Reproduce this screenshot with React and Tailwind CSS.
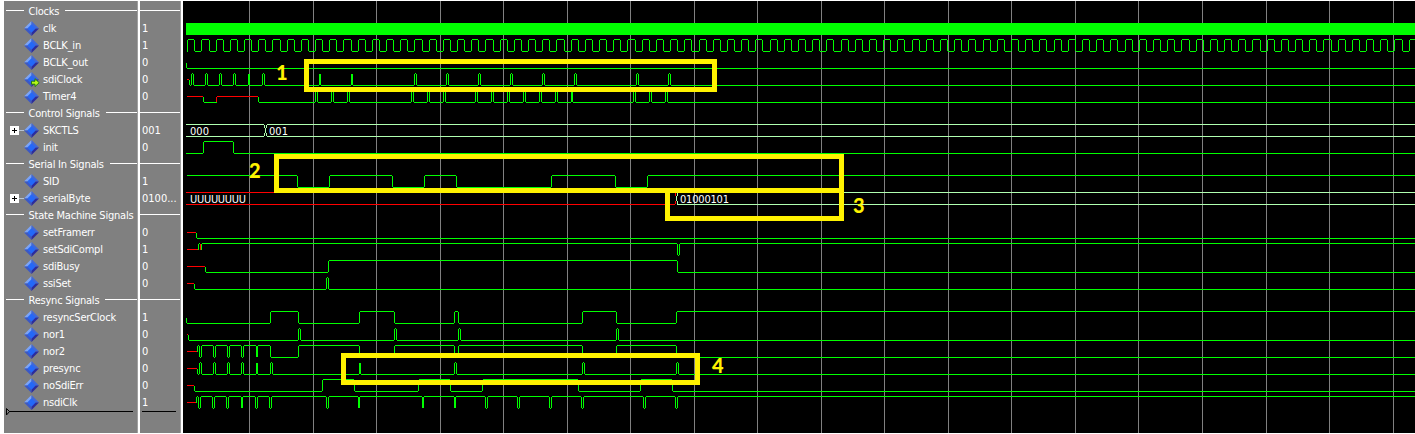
import React from "react";

const ROWS = [
  { group: "Clocks" },
  { name: "clk", value: "1" },
  { name: "BCLK_in", value: "1" },
  { name: "BCLK_out", value: "0" },
  { name: "sdiClock", value: "0", arrow: true },
  { name: "Timer4", value: "0" },
  { group: "Control Signals" },
  { name: "SKCTLS", value: "001", expand: true },
  { name: "init", value: "0" },
  { group: "Serial In Signals" },
  { name: "SID", value: "1" },
  { name: "serialByte", value: "0100...", expand: true },
  { group: "State Machine Signals" },
  { name: "setFramerr", value: "0" },
  { name: "setSdiCompl", value: "1" },
  { name: "sdiBusy", value: "0" },
  { name: "ssiSet", value: "0" },
  { group: "Resync Signals" },
  { name: "resyncSerClock", value: "1" },
  { name: "nor1", value: "0" },
  { name: "nor2", value: "0" },
  { name: "presync", value: "0" },
  { name: "noSdiErr", value: "0" },
  { name: "nsdiClk", value: "1" },
];

const END = 1415;

// row: index in the list; start: x where the defined level begins; from: level
// before it (mid = unknown); level: first defined level; edges: x of each toggle.
const bclkEdges = [];
for (let i = 1; 187.2 + i * 7.1015 < END; i++) bclkEdges.push(Math.round(187.2 + i * 7.1015));

const WAVES = [
  { row: 2, start: 187, level: 1, full: true, edges: bclkEdges },
  { row: 3, start: 186, level: 0, edges: [] },
  { row: 4, start: 189, level: 0, edges: [191, 193, 205, 207, 219, 221, 233, 235, 248, 249, 262, 264, 319, 320, 351, 352, 414, 416, 446, 448, 478, 480, 510, 512, 542, 544, 574, 576, 636, 638, 668, 670] },
  { row: 5, start: 203, level: 0, edges: [], end: 216 },
  { row: 5, start: 258, level: 0, noUnknown: true, edges: [315, 317, 331, 333, 347, 349, 411, 413, 427, 429, 443, 445, 475, 477, 491, 493, 507, 509, 523, 525, 539, 541, 555, 557, 571, 572, 633, 635, 649, 651, 665, 667] },
  { row: 8, start: 186, level: 0, bare: true, edges: [203, 233] },
  { row: 10, start: 186, level: 1, bare: true, edges: [297, 329, 392, 424, 456, 551, 615, 647] },
  { row: 13, start: 196, level: 0, edges: [] },
  { row: 14, start: 198, level: 1, edges: [], end: 200 },
  { row: 14, start: 201, level: 1, noUnknown: true, edges: [677, 679] },
  { row: 15, start: 205, level: 0, edges: [328, 677] },
  { row: 16, start: 194, level: 0, edges: [326, 328] },
  { row: 18, start: 186, level: 0, edges: [270, 298, 359, 394, 454, 458, 582, 616, 676] },
  { row: 19, start: 188, level: 0, edges: [298, 300, 394, 396, 458, 460, 616, 618] },
  { row: 20, start: 197, level: 1, edges: [199, 201, 213, 215, 227, 229, 241, 243, 256, 257, 270, 298, 359, 394, 454, 458, 582, 616, 676] },
  { row: 21, start: 197, level: 0, edges: [199, 201, 213, 215, 227, 229, 241, 243, 256, 257, 270, 272, 359, 360, 454, 456, 582, 584, 676, 678] },
  { row: 22, start: 194, level: 0, edges: [322, 354, 418, 450, 482, 578, 640, 672] },
  { row: 23, start: 196, level: 1, edges: [198, 200, 212, 214, 226, 228, 241, 242, 255, 257, 269, 271, 326, 328, 358, 359, 422, 423, 454, 455, 485, 487, 517, 519, 549, 551, 581, 583, 643, 645, 675, 677] },
];

// One-pixel runs, inclusive on both ends.
const hLine = (x1, x2, y) => (x2 >= x1 ? `M${x1} ${y}H${x2 + 1}V${y + 1}H${x1}Z` : "");
const vLine = (x, y1, y2) => `M${x} ${y1}V${y2 + 1}H${x + 1}V${y1}Z`;

function wavePath({ row, start, level, edges, end = END, full, bare }) {
  const mid = 11 + 17 * row;
  const hi = mid - 6;
  const lo = mid + 6;
  let d = "";
  if (full) d += vLine(start, hi + 1, lo);
  else if (!bare) d += level ? vLine(start, hi + 1, mid) : vLine(start, mid + 1, lo);
  let x = start;
  let on = level;
  [...edges, end].forEach((next, i) => {
    d += on ? hLine(x + 1, next - 1, hi) : hLine(x, next, lo);
    if (i < edges.length) d += vLine(next, hi + 1, lo);
    x = next;
    on = on ? 0 : 1;
  });
  return d;
}

function unknownPath({ row, start, noUnknown, bare, full }) {
  if (noUnknown || bare || full) return "";
  return hLine(187, start - 1, 11 + 17 * row);
}

const GRID = [249, 313, 376, 440, 503, 567, 630, 694, 757, 821, 884, 948, 1011, 1075, 1138, 1202, 1266, 1329, 1393];

const redExtra =
  vLine(216, 97, 102) + hLine(217, 257, 96) + vLine(200, 244, 249) +
  hLine(186, 674, 192) + hLine(186, 674, 204) + vLine(675, 193, 195) + vLine(675, 201, 203);

const busPath =
  hLine(186, 263, 124) + hLine(186, 263, 136) +
  vLine(264, 125, 127) + vLine(265, 128, 132) + vLine(264, 133, 135) +
  vLine(266, 125, 127) + vLine(266, 133, 135) +
  hLine(267, END, 124) + hLine(267, END, 136) +
  vLine(677, 193, 195) + vLine(676, 196, 200) + vLine(677, 201, 203) +
  hLine(677, END, 192) + hLine(677, END, 204);

const NOTES = [
  { text: "1", box: "left-[121px] top-[58px] h-[33px] w-[413px]", label: "left-[93px] top-[59px]" },
  { text: "2", box: "left-[91px] top-[153px] h-[39px] w-[570px]", label: "left-[66px] top-[157px]" },
  { text: "3", box: "left-[482px] top-[187px] h-[33px] w-[179px]", label: "left-[670px] top-[192px]" },
  { text: "4", box: "left-[158px] top-[352px] h-[32px] w-[359px]", label: "left-[529px] top-[352px]" },
];

function Diamond({ arrow }) {
  return (
    <svg width="15" height="15" viewBox="0 0 15 15" className="shrink-0 overflow-visible">
      <path d="M7.5 0L0 7.5H7.5Z" fill="#7ba4f8" />
      <path d="M7.5 0L15 7.5H7.5Z" fill="#4068d8" />
      <path d="M0 7.5L7.5 15V7.5Z" fill="#3c58c4" />
      <path d="M15 7.5L7.5 15V7.5Z" fill="#2c2c9c" />
      <path d="M7.5 3.3L11.7 7.5L7.5 11.7L3.3 7.5Z" fill="#2468f8" />
      {arrow && (
        <path d="M7.5 9.2H11V6.7L15.2 10.7L11 14.6V12.2H7.5Z" fill="#b8f818" stroke="#187808" strokeWidth="0.9" />
      )}
    </svg>
  );
}

function NameRow({ row }) {
  if (row.group) {
    return (
      <div className="flex h-[17px] items-center pl-[2px]">
        <span className="mb-[2px] h-px w-[18px] shrink-0 bg-white" />
        <span className="ml-[4.5px] mr-[6px] whitespace-nowrap leading-[17px]">{row.group}</span>
        <span className="mb-[2px] h-px min-w-0 flex-1 bg-white" />
      </div>
    );
  }
  return (
    <div className="flex h-[17px] items-center">
      <div className="flex w-[20px] shrink-0 items-center pl-[6px]">
        {row.expand && (
          <svg width="14" height="9" viewBox="0 0 14 9" shapeRendering="crispEdges">
            <path d="M0 0H9V9H0Z" fill="#fff" />
            <path d="M2 4H7V5H2ZM4 2H5V7H4Z" fill="#000" />
            <path d="M9 4H14V5H9Z" fill="#b8c4d0" />
          </svg>
        )}
      </div>
      <Diamond arrow={row.arrow} />
      <span className="ml-[4px] whitespace-nowrap leading-[17px]">{row.name}</span>
    </div>
  );
}

export default function App() {
  return (
    <div className="h-[434px] w-[1415px] overflow-hidden bg-white pb-px pt-px font-['DejaVu_Sans_Condensed','DejaVu_Sans',sans-serif] text-[11px] text-white">
      <div className="flex h-full pl-[4px]">
        <div className="h-full w-[134px] shrink-0 overflow-hidden border-r border-[#a0a0a0] bg-[#808080] pt-[2px] tracking-[-0.22px]">
          {ROWS.map((row, i) => (
            <NameRow key={i} row={row} />
          ))}
          <svg width="130" height="9" viewBox="0 0 130 9" className="-mt-[4px] ml-[2px] block">
            <path d="M0.5 1.5V8L3.5 4.5Z" fill="none" stroke="#000" />
            <path d="M3 4H127V5H3Z" fill="#000" />
          </svg>
        </div>
        <div className="ml-[2px] h-full w-[41px] shrink-0 border-r border-[#a0a0a0] bg-[#808080] pt-[2px]">
          {ROWS.map((row, i) => (
            <div key={i} className="flex h-[17px] items-center">
              {row.group ? (
                <span className="mb-[2px] h-px w-full bg-white" />
              ) : (
                <span className="pl-[2px] leading-[17px]">{row.value}</span>
              )}
            </div>
          ))}
          <div className="ml-[2px] h-px w-[34px] bg-black" />
        </div>
        <div className="relative ml-[2px] h-full min-w-0 flex-1 overflow-hidden bg-black">
          <svg width="1232" height="432" viewBox="183 1 1232 432" shapeRendering="crispEdges" className="block">
            <path d={GRID.map((x) => vLine(x, 1, 433)).join("")} fill="#808080" />
            <rect x="186" y="23" width="1229" height="12" fill="#00ff00" />
            <path d={busPath} fill="#b0ffb0" />
            <path d={WAVES.map(unknownPath).join("") + redExtra} fill="#ff0000" />
            <path d={WAVES.map(wavePath).join("")} fill="#00ff00" />
            <g fill="#fff" fontSize="11">
              <text x="190" y="135" textLength="19">000</text>
              <text x="269" y="135" textLength="19">001</text>
              <text x="190" y="203" textLength="56">UUUUUUUU</text>
              <text x="680" y="203" textLength="49">01000101</text>
            </g>
          </svg>
          {NOTES.map((n) => (
            <React.Fragment key={n.text}>
              <div className={`absolute border-[5px] border-[#fff200] ${n.box}`} />
              <div className={`absolute font-[Lato,sans-serif] text-[20px] font-black leading-[24px] text-[#fff200] ${n.label}`}>
                {n.text}
              </div>
            </React.Fragment>
          ))}
        </div>
      </div>
    </div>
  );
}
